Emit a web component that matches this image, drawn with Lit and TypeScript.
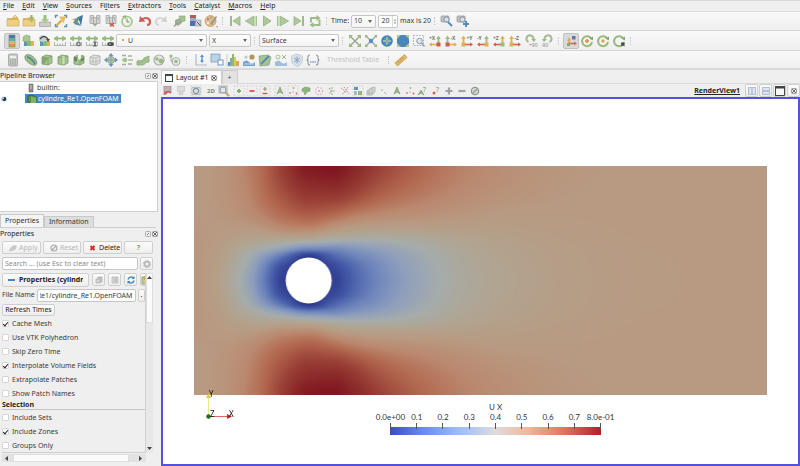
import { LitElement, html, svg, css } from "lit";
import type { TemplateResult, SVGTemplateResult } from "lit";
import { customElement, property } from "lit/decorators.js";
import { classMap } from "lit/directives/class-map.js";

const cube = svg`
  <path d="M2 4l4-2 6 1v7l-4 2-6-1z" fill="#9bbf7c" stroke="#6f8a5a" stroke-width=".8"/>
  <path d="M2 4l6 1v7M8 5l4-2" fill="none" stroke="#6f8a5a" stroke-width=".8"/>`;
const range = svg`
  <path d="M1 4.5h12" stroke="#7fa860" stroke-width="1.6"/>
  <path d="M4.500 2L1 4.500l3.500 2.500zM9.500 2L13 4.500l-3.500 2.500z" fill="#8fbb6c" stroke="#6f9650" stroke-width=".4"/>
  <path d="M1.500 8v4M12.500 8v4M1.500 11.500h11M4.500 9.500v2M7 9.500v2M9.500 9.500v2" stroke="#9a9f9a" stroke-width=".8" fill="none"/>`;
const server = (mark: SVGTemplateResult) => svg`
  <path d="M2 1.500h3.500v8H2zM8.500 1.500H12v8H8.500zM5.500 3.500h3v7h-3z" fill="#cfd0cf" stroke="#9c9e9c" stroke-width=".8"/>
  <path d="M3 4h2M9 4h2M3 6h1M10 6h1" stroke="#888" stroke-width=".7"/>${mark}`;
const folder = svg`
  <path d="M1 4h5l1-1h5v9H1z" fill="#d9b04c"/><path d="M1 5.500h12v6.500H1z" fill="#efcb6e" stroke="#bd9a50" stroke-width=".6"/>`;
const bubbles = svg`
  <circle cx="7" cy="7" r="5" fill="#e4e6e2" stroke="#a2a8a0" stroke-width="1.200"/>
  <circle cx="5" cy="6" r="1.800" fill="#92b574"/><circle cx="9" cy="8" r="2" fill="#92b574" stroke="#70865e" stroke-width=".5"/>`;
const mapped = svg`<path d="M3 7h10v5H3z" fill="#3e8bb8"/><path d="M6 7h4v5H6z" fill="#76b36a"/><path d="M10 7h3v5h-3z" fill="#e0ad3c"/>`;
const camera = svg`
  <rect x="1" y="2" width="8" height="6" rx="1" fill="#b8bcbf" stroke="#83878a" stroke-width=".7"/>
  <circle cx="6.500" cy="5.500" r="2.600" fill="#d5dde3" stroke="#7c8388" stroke-width="1"/>`;
const dots = svg`<rect x="2" y="2" width="10" height="10" fill="none" stroke="#c4c4c4" stroke-width=".8" stroke-dasharray="1.500 1.500"/>`;
const glass = svg`<circle cx="6" cy="6" r="3" fill="#dfe6ea" stroke="#8a9298" stroke-width="1"/><path d="M8.500 8.500L12 12" stroke="#8a9298" stroke-width="1.600"/>`;
const tri = svg`<path d="M4 10l3-7 3 7-3-2z" fill="#8eb670" stroke="#69854f" stroke-width=".6"/>`;
const specks = svg`<circle cx="4" cy="9" r=".9" fill="#d2766c"/><circle cx="7.500" cy="4" r=".9" fill="#8db36b"/><circle cx="10.500" cy="9.500" r=".9" fill="#c9564c"/><circle cx="7" cy="8" r=".6" fill="#666"/>`;
const ring = svg`<path d="M11.300 4.500A5 5 0 1 0 12 8" fill="none" stroke="#8cb26f" stroke-width="2"/><path d="M9 4.500l4-2v4z" fill="#7ba25c"/>`;

function axis(up: string, side: string, left: boolean, label: string): SVGTemplateResult {
  const x = left ? 10.5 : 3.5;
  const end = left ? 1 : 13;
  const dir = left ? 3 : -3;
  return svg`
    <path d="M${x} 10V4" stroke=${up} stroke-width="1.800"/><path d="M${x - 2.4} 5l2.400-3.500 2.400 3.500z" fill=${up}/>
    <path d="M${x} 10.500H${end - Math.sign(end - x)}" stroke=${side} stroke-width="1.600"/>
    <path d="M${end} 10.500l${dir}-2v4z" fill=${side}/>
    <rect x=${x - 2} y="8.500" width="4" height="4" fill=${side === "#cf4f3c" ? (up === "#8fb56f" ? "#dda93a" : left ? "#8fb56f" : "#dda93a") : "#c24b39"}/>
    <text x=${left ? 1 : 6.5} y="6" font-size="5" font-family="Noto Sans" font-weight="700" fill="#666">${label}</text>`;
}
const G = "#8fb56f";
const Y = "#dda93a";
const R = "#cf4f3c";

const icons: Record<string, SVGTemplateResult> = {
  open: svg`${folder}<path d="M9 4.500V1M7 3l2-2 2 2" stroke="#e0bd62" stroke-width="1" fill="none"/>`,
  openDown: svg`${folder}<path d="M9.500 1v4" stroke="#7fae55" stroke-width="2"/><path d="M6.500 5h6l-3 3.500z" fill="#8fbb63"/>`,
  save: svg`<path d="M1.500 8h11v4.500h-11z" fill="#c6c9c6" stroke="#9c9f9c" stroke-width=".8"/><path d="M7 1v5" stroke="#8fb56f" stroke-width="3"/><path d="M3 5h8l-4 4.500z" fill="#9dc47c"/>`,
  extract: svg`<path d="M1.500 4V1.500H4M10 1.500h2.500V4M12.500 10v2.500H10M4 12.500H1.500V10" stroke="#4d87b8" fill="none" stroke-width="1.500"/><path d="M2.500 11.500l5-5" stroke="#dca33a" stroke-width="2.400"/><path d="M5 2.500h7L9.500 9.500z" fill="#e9b64a"/>`,
  ship: svg`<path d="M1.500 6l4-1.500 2 1z" fill="#c34440"/><path d="M3 8.500l5-6 1 3-3 5z" fill="#4f8a5d"/><path d="M8 3l5-2-2 11z" fill="#2f5f93"/><path d="M4 10l4-2 3 4z" fill="#3d7f9d"/>`,
  connect: server(svg`<path d="M4.500 9.500h5l-2.500 3z" fill="#8aa27b"/>`),
  disconnect: server(svg`<path d="M6 9l4 3.500M10 9l-4 3.500" stroke="#cf3f35" stroke-width="1.600"/>`),
  reset: svg`<circle cx="7" cy="7.500" r="5" fill="#eef2e9" stroke="#9bbf7c" stroke-width="1.600"/><path d="M7 4.500v3.500h2.500" stroke="#6d7d60" fill="none"/><path d="M2 2.500L6 1v4z" fill="#8db36b"/>`,
  undo: svg`<path d="M4 5.500c4-3 8-1 8 2.500 0 2-1.500 3-3 3" fill="none" stroke="#c64a40" stroke-width="2.200"/><path d="M1 8L2 2l5.500 5.500z" fill="#c64a40"/>`,
  redo: svg`<path d="M10 5.500c-4-3-8-1-8 2.500 0 2 1.500 3 3 3" fill="none" stroke="#d4d6d4" stroke-width="2.200"/><path d="M13 8L12 2 6.500 7.500z" fill="#caccca"/>`,
  find: svg`<path d="M3 6l5-2 2 5-4 3-3-2z" fill="#93a58a"/><path d="M7 2h6v5l-4 1z" fill="#99bd7d" stroke="#7d9b67" stroke-width=".6"/><path d="M2 12.500l4-4" stroke="#85907f" stroke-width="1.500"/>`,
  mapLoad: svg`<rect x="2" y="1" width="6" height="3" fill="#b6413d"/><rect x="2" y="4" width="6" height="3" fill="#8f9fd1"/><rect x="2" y="7" width="6" height="5" fill="#2e66a6"/><path d="M8 6h5v6H7z" fill="#c3c6c8" stroke="#93989b" stroke-width=".7"/><path d="M9 8l4 4" stroke="#3f4a52"/>`,
  palette: svg`<circle cx="6.500" cy="7" r="5.500" fill="#e2b47c" stroke="#b38a58" stroke-width=".7"/><circle cx="4" cy="5" r="1.100" fill="#4b83bd"/><circle cx="7" cy="3.500" r="1" fill="#6aa651"/><circle cx="4" cy="9" r="1.100" fill="#fff"/><path d="M6 10l6-8 1 1-5 8z" fill="#8e877f"/><path d="M12 12.500h2l-1 1z" fill="#444"/>`,
  first: svg`<path d="M2 2h2v10H2z" fill="#91b673"/><path d="M12 2.500v9L5 7z" fill="#a4c48b" stroke="#8aab70" stroke-width=".8"/>`,
  stepBack: svg`<path d="M10 2v10L1.500 7z" fill="#a4c48b" stroke="#8aab70" stroke-width=".8"/><path d="M12.200 2v10" stroke="#8aab70" stroke-width="1.200"/>`,
  play: svg`<path d="M3.500 2v10l7.500-5z" fill="#a4c48b" stroke="#8aab70" stroke-width=".9"/>`,
  stepNext: svg`<path d="M4 2v10l8.500-5z" fill="#a4c48b" stroke="#8aab70" stroke-width=".8"/><path d="M1.800 2v10" stroke="#8aab70" stroke-width="1.200"/>`,
  last: svg`<path d="M10 2h2v10h-2z" fill="#91b673"/><path d="M2 2.500v9L9 7z" fill="#a4c48b" stroke="#8aab70" stroke-width=".8"/>`,
  loop: svg`<path d="M3 8.500V4h6.500M11.500 5.500V11H4.500" fill="none" stroke="#93b578" stroke-width="1.900"/><path d="M8.500 1l4 3-4 3zM5.500 8l-4 3 4 2.800z" fill="#93b578"/>`,
  camEdit: svg`${camera}<path d="M8 8l4 4" stroke="#3b81b9" stroke-width="2"/>`,
  camAdd: svg`${camera}<path d="M10 7v6M7 10h6" stroke="#3b81b9" stroke-width="2"/>`,
  colorbar: svg`<path d="M4 1h6v3H4z" fill="#2f6e9e"/><path d="M4 4h6v3H4z" fill="#5aa69a"/><path d="M4 7h6v3H4z" fill="#dcb64a"/><path d="M4 10h6v3H4z" fill="#d98f3c"/><rect x="4" y="1" width="6" height="12" fill="none" stroke="#6c7b85" stroke-width=".6"/>`,
  editMap: svg`${mapped}<path d="M2 7V3l3-2 4 1v5l-3 1z" fill="#9fc283" stroke="#7d9d62" stroke-width=".6"/>`,
  separate: svg`${mapped}<path d="M2 7V3l3-2 4 1v5l-3 1z" fill="#c5c9cc"/><path d="M3 5q4-5 8 0" fill="none" stroke="#333" stroke-width="1.400"/><path d="M9 5h4l-2 3z" fill="#333"/>`,
  rescale: range,
  rescaleCustom: svg`${range}<circle cx="9.500" cy="10" r="2.400" fill="#666"/><circle cx="9.500" cy="10" r=".9" fill="#eee"/>`,
  rescaleTime: svg`${range}<path d="M8 7.500h4l-1.500 2.500 1.500 2.500H8l1.500-2.500z" fill="#555"/>`,
  rescaleVisible: svg`${range}<ellipse cx="9.500" cy="10" rx="3.200" ry="2" fill="#333"/><circle cx="9" cy="10" r=".7" fill="#fff"/>`,
  resetCam: svg`<path d="M2 2l10 10M12 2L2 12" stroke="#8c9a80" stroke-width="1.400"/><path d="M1 1h4L1 5zM13 1v4L9 1zM1 13V9l4 4zM13 13H9l4-4z" fill="#8fb070"/>`,
  closest: svg`<path d="M2 2l10 10M12 2L2 12" stroke="#8c9a80" stroke-width="1.300"/><path d="M1 1h3L1 4zM13 1v3l-3-3zM1 13v-3l3 3zM13 13h-3l3-3z" fill="#8fb070"/><circle cx="7" cy="7" r="2.200" fill="#3e84bb"/>`,
  zoomData: svg`<circle cx="7" cy="7" r="5.800" fill="#2f74b1"/><path d="M7 3v8M3 7h8" stroke="#8fb98b" stroke-width="1.800"/><path d="M4 4l6 6M10 4l-6 6" stroke="#6fa0a2" stroke-width=".8"/>`,
  zoomClosest: svg`<rect x="1" y="1" width="12" height="12" rx="2" fill="#3277b4"/><path d="M1 1h4L1 5zM13 1v4L9 1zM1 13V9l4 4zM13 13H9l4-4z" fill="#a5c585"/>`,
  zoomBox: svg`<rect x="1.500" y="1.500" width="10" height="10" fill="none" stroke="#999" stroke-width=".9" stroke-dasharray="1.500 1.300"/><circle cx="7.500" cy="7" r="2.800" fill="#d6e2ea" stroke="#8797a3" stroke-width="1"/><path d="M9.500 9l3 3.500" stroke="#8797a3" stroke-width="1.500"/>`,
  px: axis(G, Y, true, "+X"),
  mx: axis(G, Y, false, "-X"),
  py: axis(Y, R, false, "+Y"),
  my: axis(G, R, true, "-Y"),
  pz: axis(Y, R, true, "+Z"),
  mz: axis(Y, R, false, "-Z"),
  rotR: svg`<path d="M4.500 8a3.500 3.500 0 1 1 5-3" fill="none" stroke="#9ab485" stroke-width="2"/><path d="M7 5h5l-2 3z" fill="#8fae78"/><text x="5" y="13" font-size="5" font-family="Noto Sans" fill="#777">+90</text>`,
  rotL: svg`<path d="M9.500 8a3.500 3.500 0 1 0-5-3" fill="none" stroke="#9ab485" stroke-width="2"/><path d="M7 5H2l2 3z" fill="#8fae78"/><text x="1" y="13" font-size="5" font-family="Noto Sans" fill="#777">-90</text>`,
  orient: svg`<path d="M5 11V6" stroke="#dba63a" stroke-width="1.500"/><path d="M3 6.500l2-3 2 3z" fill="#dba63a"/><path d="M4 9.500h7" stroke="#cf5a45" stroke-width="1.500"/><path d="M10 7.500l3 2-3 2z" fill="#cf5a45"/><rect x="8" y="2" width="3.500" height="3.500" fill="#55699b"/><rect x="3" y="9" width="3" height="3" fill="#7aa35b"/>`,
  centerShow: svg`${ring}<path d="M7 5v4M5 7h4" stroke="#d7903c" stroke-width="1.800"/>`,
  centerReset: svg`${ring}<circle cx="7" cy="7" r="1.800" fill="#d7a13c"/>`,
  centerPick: svg`${ring}<path d="M9 8.500h3.500v4l-1.500-1-1.500 1z" fill="#333"/>`,
  calc: svg`<rect x="2.500" y="1" width="9" height="12" rx="1" fill="#c4c6c4" stroke="#929492" stroke-width=".8"/><path d="M4 3h6v2H4z" fill="#eef2ee"/><path d="M4 7h6M4 9h6M4 11h6" stroke="#7f817f" stroke-dasharray="1.300 1"/>`,
  contour: svg`<path d="M1 3c2-3 8-1 11 4 2 4 0 6-3 5C5 11 0 7 1 3z" fill="#8fb873" stroke="#66855a" stroke-width=".8"/><path d="M3 4c2 0 6 3 8 7" fill="none" stroke="#3c6897" stroke-width="1.500"/>`,
  clip: svg`${cube}<path d="M2 4l6 1-4 6.500-2-.5z" fill="#739c5b"/>`,
  slice: svg`${cube}<path d="M6 2.500l3 .5v8l-3 1z" fill="#c3deae" stroke="#7b9a63" stroke-width=".5"/>`,
  threshold: svg`${cube}<path d="M2 4l3 .5v4L2 8zM9 6l3-2v3l-3 2z" fill="#54794a"/><path d="M6 1h3v4l-1.500 2L6 5z" fill="#f0f3ee"/>`,
  subset: svg`<path d="M2 4l4-2 6 1v7l-4 2-6-1z" fill="#dcdedc" stroke="#a0a3a0" stroke-width=".8"/><path d="M2 4l6 1v7M8 5l4-2M5 4.500v7M2 8l6 1 4-2" fill="none" stroke="#adb0ad" stroke-width=".7"/>`,
  glyph: svg`<path d="M7 0l2.500 3H4.500zM7 14l-2.500-3h5zM0 7l3-2.500v5zM14 7l-3 2.500v-5z" fill="#5586b0"/><circle cx="7" cy="7" r="3.600" fill="#a8c592" stroke="#6d8e9f" stroke-width=".8"/><path d="M7 3v8M3 7h8" stroke="#6d8e9f" stroke-width=".7"/>`,
  stream: svg`<path d="M2 2.500h4M8 3h4M2 7h3M2 11.500h4M8 11h4" stroke="#9ba39a" stroke-width="1.400" fill="none"/><circle cx="5" cy="7" r="2.300" fill="#9bbd82"/><path d="M8 6h5v2H8z" fill="#afc89c"/>`,
  warp: svg`<path d="M1 8c3-1 5 1 7-3l5-2v6c-4 0-4 3-7 3H1z" fill="#9cbd83" stroke="#7e9f65" stroke-width=".8"/><path d="M1 10c4-1 6 0 9-4" fill="none" stroke="#7e9f65" stroke-width=".6"/>`,
  group: bubbles,
  extractLevel: svg`<circle cx="8" cy="8.500" r="4" fill="#e4e6e2" stroke="#a2a8a0" stroke-width="1"/><circle cx="8" cy="8.500" r="1.800" fill="#92b574"/><circle cx="3" cy="3" r="1.600" fill="#92b574"/><path d="M3 4v4l2 1" fill="none" stroke="#8a9188" stroke-width=".8"/>`,
  plotLine: svg`<path d="M2 1v11h11" fill="none" stroke="#a7b3bd" stroke-width="1.200"/><path d="M8 2v7" stroke="#3f83bd" stroke-width="1.400"/><path d="M6 4l2-2.500L10 4zM6 7.500L8 10l2-2.500z" fill="#3f83bd"/>`,
  probe: svg`<rect x="1" y="1" width="9" height="8" fill="#b5cee4" stroke="#6d94b5" stroke-width=".8"/><rect x="8" y="7" width="5" height="5" fill="#fff" stroke="#5a8fbd" stroke-width="1"/>`,
  histogram: svg`<path d="M2 9h2v4H2z" fill="#3f7fb9"/><path d="M4 5h2v8H4z" fill="#5da7b8"/><path d="M6 1h2v12H6z" fill="#7eb25a"/><path d="M8 4h2v9H8z" fill="#e0c148"/><path d="M10 8h3v5h-3z" fill="#d99c3c"/><path d="M1 1v12h12" fill="none" stroke="#b5b5b5" stroke-width=".7"/>`,
  plotSel: svg`<circle cx="10" cy="4" r="2.600" fill="#a98647"/><circle cx="4" cy="4" r="1.600" fill="#b7c0c8"/><path d="M1 9q4-3 6 0t6 0v4H1z" fill="#5f97c8"/><path d="M2 11h10" stroke="#dce9f4" stroke-width=".8"/>`,
  ruled: svg`<path d="M1 3l9-1 3 2-2 8-9 1z" fill="#9dbb88" stroke="#6d8f7c" stroke-width=".7"/><path d="M3 11l8-8" stroke="#2f75a7" stroke-width="1.700"/>`,
  plotGroup: svg`<circle cx="4" cy="4" r="2" fill="none" stroke="#9bb888"/><path d="M8 2l4 4M12 2L8 6" stroke="#95b07f"/><path d="M1 9q4-3 6 0t6 0v4H1z" fill="#94b8d8"/>`,
  shield: svg`<path d="M7 1l5.500 2v4c0 4-3 5.500-5.500 6.500C4.500 12.500 1.500 11 1.500 7V3z" fill="#d3dfea" stroke="#b5c6d5" stroke-width=".8"/><path d="M7 3.500v7M4 5l6 4M10 5l-6 4" stroke="#7d9ab5"/>`,
  braces: svg`<path d="M4 2q-2 0-2 2v2L1 7l1 1v2q0 2 2 2M10 2q2 0 2 2v2l1 1-1 1v2q0 2-2 2" fill="none" stroke="#868a8d" stroke-width="1.100"/><circle cx="4.800" cy="9" r=".8" fill="#3f83bd"/><circle cx="7" cy="9" r=".8" fill="#3f83bd"/><circle cx="9.200" cy="9" r=".8" fill="#3f83bd"/>`,
  ruler: svg`<path d="M1 10L10.500 1.500l2.500 3L3.500 13z" fill="#dfb050" stroke="#b98f40" stroke-width=".8"/><path d="M4 8l1 1.500M6 6l1 1.500M8 4.500l1 1.500" stroke="#8a6420" stroke-width=".7"/>`,
  vUndo: svg`<rect x="3" y="2.500" width="7" height="5" fill="#b8a9a9" stroke="#8d7a7a" stroke-width=".7"/><path d="M4 10q3-4 6-1" stroke="#cb4941" stroke-width="1.800" fill="none"/><path d="M2.500 11l.5-4 3 3z" fill="#cb4941"/>`,
  vRedo: svg`<rect x="3.500" y="2.500" width="7" height="5" fill="#d8dad8" stroke="#bcbebc" stroke-width=".7"/><circle cx="7" cy="9" r="2.500" fill="#cfd1cf"/>`,
  vCam: svg`${dots}<circle cx="7" cy="7" r="2.600" fill="#d4dde2" stroke="#7c8992" stroke-width="1.100"/><path d="M3 3.500h8v7H3z" fill="none" stroke="#9ea8ae" stroke-width=".8"/>`,
  v2d: svg`<text x="3" y="9" font-size="6" font-family="Noto Sans" font-weight="700" fill="#71825f">2D</text>`,
  vZoom: svg`<rect x="2" y="2" width="8" height="7" fill="#cfd3d5" stroke="#9a9fa2" stroke-width=".8"/>${glass}<path d="M9 9l3 3" stroke="#c79b45" stroke-width="1.800"/>`,
  vAdd: svg`${dots}<path d="M7 5v4M5 7h4" stroke="#76a656" stroke-width="1.900"/>`,
  vSub: svg`${dots}<path d="M4.500 7h5" stroke="#cc4038" stroke-width="1.800"/>`,
  vTog: svg`${dots}<path d="M7 3v4M5 5h4" stroke="#7a8f6b" stroke-width="1.200"/><path d="M4.500 9.500h5" stroke="#cc4038" stroke-width="1.400"/>`,
  vCells: svg`${dots}${tri}`,
  vPoints: svg`${dots}${specks}`,
  vFrCells: svg`<path d="M3 5l3-2 5 1v3l-3 1-2 3-1-3-2-1z" fill="#84ae6e" stroke="#6a9055" stroke-width=".6"/>`,
  vFrPoints: svg`<circle cx="7" cy="7" r="3.600" fill="none" stroke="#e0aaa2" stroke-width="1.200" stroke-dasharray="1.500 1.500"/><circle cx="7" cy="7" r=".8" fill="#c95b50"/>`,
  vPoly: svg`<path d="M4 4l3 3-3 3M7 3v8M5 7h6" fill="none" stroke="#9db489" stroke-width="1.200" stroke-dasharray="2 1"/>`,
  vPolyPt: svg`<path d="M3 4l4 3-3 4M6 3l5 7M10 3L7 9" fill="none" stroke="#c08a80" stroke-width="1" stroke-dasharray="1.500 1"/>`,
  vBlock: svg`<path d="M3 3h4v3H3z" fill="#4c87b4"/><path d="M7 7h4v4H7z" fill="#86ad6a"/><path d="M3 7h3v4H3z" fill="#9fb1bd"/>${dots}`,
  vFrBlock: svg`<path d="M3 7l4-3 4-1v5l-3 3H3z" fill="#cdd0cb" stroke="#a5aaa3" stroke-width=".8"/><path d="M3 9h6M5 6v5M8 4v7" stroke="#a0a59d" stroke-width=".6"/>`,
  vHover: svg`<circle cx="5" cy="6" r="1" fill="#bcc1b8"/><path d="M7 8l2.500 2.500" stroke="#a5aaa2"/>`,
  vInterCell: tri,
  vInterPt: specks,
  vAskCell: svg`<path d="M2 11l3-5 3 5-3-2z" fill="#8eb670" stroke="#69854f" stroke-width=".6"/><text x="7" y="8" font-size="7" font-family="Noto Sans" fill="#6f8b5b">?</text>`,
  vAskPt: svg`<circle cx="5" cy="9" r="1.500" fill="#c94d43"/><text x="7" y="8" font-size="7" font-family="Noto Sans" fill="#6f8b5b">?</text>`,
  vGrow: svg`<path d="M7 3.500v7M3.500 7h7" stroke="#969996" stroke-width="2.200"/>`,
  vShrink: svg`<path d="M3.500 7h7" stroke="#969996" stroke-width="2.200"/>`,
  vClear: svg`<circle cx="7" cy="7" r="3.600" fill="#d9dbd9" stroke="#858885" stroke-width="1.300"/><path d="M5 9l4-4" stroke="#858885" stroke-width="1.300"/>`,
  splitH: svg`<rect x="3.500" y="3.500" width="7" height="7" fill="#dde3f1" stroke="#b3bdd6"/><path d="M7 4v6" stroke="#b3bdd6" stroke-width="1.300"/>`,
  splitV: svg`<rect x="3.500" y="3.500" width="7" height="7" fill="#dde3f1" stroke="#b3bdd6"/><path d="M4 7h6" stroke="#a7b2cf" stroke-width="1.300"/>`,
  maximize: svg`<rect x="2.500" y="2.500" width="9" height="9" fill="#f7f7f5" stroke="#3f4543"/><path d="M2 3.500h10" stroke="#3f4543" stroke-width="2"/>`,
  close: svg`<rect x="4.500" y="4.500" width="5" height="5" rx="1" fill="#eee" stroke="#888" stroke-width=".8"/><path d="M5 5l4 4M9 5L5 9" fill="none" stroke="#555" stroke-width=".9"/>`,
  float: svg`<rect x="4.500" y="4.500" width="5" height="5" rx="1" fill="#eee" stroke="#999" stroke-width=".8"/><path d="M6 8l2-2" fill="none" stroke="#777" stroke-width=".9"/>`,
  apply: svg`<path d="M4 11l1-4 4-3 3 1-2 4-4 1z" fill="#c6c9c6"/>`,
  cancel: svg`<circle cx="8" cy="7" r="3" fill="none" stroke="#a9aba9" stroke-width="1.100"/><path d="M6 9l4-4" stroke="#a9aba9" stroke-width="1.100"/>`,
  remove: svg`<path d="M5.500 5l4 4M9.500 5l-4 4" stroke="#cf2f2a" stroke-width="2"/>`,
  gear: svg`<circle cx="7" cy="7" r="2.400" fill="none" stroke="#b8bab8" stroke-width="1.800"/><circle cx="7" cy="7" r="3.800" fill="none" stroke="#b8bab8" stroke-width="1" stroke-dasharray="1.500 1.500"/>`,
  copy: svg`<path d="M6 4h4v5H6z" fill="#c9cbc9" stroke="#a9aba9" stroke-width=".8"/><path d="M4 6h4v4H4z" fill="#d6d8d6" stroke="#a9aba9" stroke-width=".8"/>`,
  paste: svg`<path d="M4 4h6v6H4z" fill="#d6d8d6" stroke="#b5b7b5" stroke-width=".8"/><path d="M6 5h3v4H6z" fill="#c3c5c3"/>`,
  refresh: svg`<path d="M4 6.500A3.200 3.200 0 0 1 9.500 5M10 7.500A3.200 3.200 0 0 1 4.500 9" fill="none" stroke="#3f83b9" stroke-width="1.300"/><path d="M10.500 3v3H7.500zM3.500 11V8h3z" fill="#3f83b9"/>`,
  disk: svg`<path d="M5 4h6v7H5z" fill="#c4c985" stroke="#8f9560" stroke-width=".8"/><path d="M8 3v4" stroke="#dca33a" stroke-width="2"/>`,
  window: svg`<rect x="3.500" y="3.500" width="7" height="7" fill="#f7f7f5" stroke="#3f4543"/><path d="M3 4h8" stroke="#3f4543" stroke-width="2"/>`,
  pc: svg`<path d="M5 3h4v8H5z" fill="#8a8c8a" stroke="#666" stroke-width=".6"/><path d="M6 5h2M6 7h2" stroke="#ddd" stroke-width=".8"/>`,
  foam: svg`<path d="M3 4l4-1 4 2v6l-5 1-3-2z" fill="#5f9147" stroke="#30592b" stroke-width=".8"/><path d="M6 5l5 .5v5.500L6 12z" fill="#82b265"/>`,
  eye: svg`<ellipse cx="6" cy="7" rx="3" ry="2.500" fill="#bcd4e6"/><circle cx="6.300" cy="7" r="1.900" fill="#17344f"/><circle cx="5.200" cy="6.200" r=".8" fill="#fff"/>`,
};

const icon = (name: string): TemplateResult =>
  html`<svg class="ico" viewBox="0 0 14 14" width="14" height="14" aria-hidden="true">${icons[name]}</svg>`;

const base = css`
  :host { box-sizing: border-box; }
  *, *::before, *::after { box-sizing: border-box; }
  button, input, select { font: inherit; color: inherit; margin: 0; padding: 0; }
  .ico { display: block; flex: none; }
  .tool { width: 16px; height: 16px; border: 0; background: none; display: flex; align-items: center; justify-content: center; flex: none; }
  .tool .ico { opacity: .88; }
  .tool.small { width: 13px; }
  .tool.on { background: #d9d9d9; border: 1px solid #c2c2c2; border-radius: 2px; }
  .framed { border: 1px solid #cfcfcf; border-radius: 2px; background: linear-gradient(#fcfcfc, #eeeeee); display: flex; align-items: center; justify-content: center; overflow: hidden; }
`;

const tools = (names: string[], on = "", small = false) =>
  names.map(n => html`<button class=${classMap({ tool: true, on: n === on, small })} aria-label=${n}>${icon(n)}</button>`);

/* Velocity samples: columns follow the stream, rows go from the axis to the wall. */
const XS = [-114, -90, -75, -60, -45, -25, 0, 25, 45, 67, 90, 120, 155, 200, 260, 340, 458];
const YS = [0, 12, 23, 32, 42, 52, 65, 80, 97, 114];
const U = [
  [.51, .46, .39, .3, .18, .02, 0, .02, .11, .195, .26, .335, .4, .445, .478, .495, .5],
  [.51, .465, .4, .32, .2, .04, 0, .04, .125, .205, .27, .34, .405, .447, .479, .495, .5],
  [.51, .475, .42, .35, .26, .13, 0, .11, .18, .235, .29, .352, .412, .452, .48, .496, .5],
  [.51, .485, .44, .4, .355, .29, .21, .215, .25, .285, .325, .375, .425, .458, .482, .497, .5],
  [.51, .493, .472, .455, .445, .445, .43, .395, .38, .38, .39, .415, .445, .468, .487, .498, .5],
  [.507, .5, .495, .5, .515, .55, .56, .51, .485, .472, .47, .472, .475, .482, .492, .499, .5],
  [.503, .508, .52, .54, .57, .61, .635, .61, .575, .55, .535, .525, .51, .498, .498, .5, .5],
  [.5, .512, .53, .56, .6, .65, .695, .69, .66, .62, .592, .565, .538, .515, .503, .5, .5],
  [.5, .513, .535, .57, .615, .685, .745, .755, .72, .67, .632, .595, .56, .53, .507, .5, .5],
  [.5, .514, .538, .578, .622, .705, .785, .796, .755, .7, .655, .61, .57, .535, .51, .5, .5],
];
const STOPS: [number, number, number, number][] = [
  [0, 44, 56, 140], [.1, 72, 94, 170], [.2, 112, 135, 188], [.28, 143, 159, 188], [.36, 166, 172, 171],
  [.44, 177, 164, 144], [.5, 184, 154, 130], [.56, 186, 136, 110], [.62, 178, 104, 80], [.7, 152, 61, 52], [.8, 126, 20, 31],
];

function slopes(xs: number[], v: number[]): number[] {
  const n = xs.length;
  const d = v.slice(1).map((b, i) => (b - v[i]) / (xs[i + 1] - xs[i]));
  return v.map((_, i) => {
    if (i === 0 || i === n - 1) return 0;
    return d[i - 1] * d[i] <= 0 ? 0 : (2 * d[i - 1] * d[i]) / (d[i - 1] + d[i]);
  });
}
function resample(xs: number[], v: number[], at: number[]): number[] {
  const m = slopes(xs, v);
  return at.map(x => {
    let i = 0;
    while (i < xs.length - 2 && x > xs[i + 1]) i++;
    const h = xs[i + 1] - xs[i];
    const t = Math.min(1, Math.max(0, (x - xs[i]) / h));
    const s = 1 - t;
    return (1 + 2 * t) * s * s * v[i] + t * s * s * h * m[i] + t * t * (3 - 2 * t) * v[i + 1] - t * t * s * h * m[i + 1];
  });
}
function shade(v: number): number[] {
  let i = 0;
  while (i < STOPS.length - 2 && v > STOPS[i + 1][0]) i++;
  const a = STOPS[i], b = STOPS[i + 1];
  const t = Math.min(1, Math.max(0, (v - a[0]) / (b[0] - a[0])));
  return [1, 2, 3].map(k => a[k] + (b[k] - a[k]) * t);
}

@customElement("flow-field")
class FlowField extends LitElement {
  static styles = css`
    :host { display: block; }
    canvas { display: block; width: 100%; aspect-ratio: 572 / 229; }
  `;
  firstUpdated() {
    const c = this.renderRoot.querySelector("canvas")!;
    const g = c.getContext("2d")!;
    const w = c.width, h = c.height;
    const px = Array.from({ length: w }, (_, i) => i - 114);
    const py = Array.from({ length: 116 }, (_, i) => i);
    const rows = U.map(r => resample(XS, r, px));
    const cols = px.map((_, i) => resample(YS, rows.map(r => r[i]), py));
    const img = g.createImageData(w, h);
    for (let y = 0; y < h; y++)
      for (let x = 0; x < w; x++) {
        const [r, gr, b] = shade(cols[x][Math.abs(y - 114)]);
        img.data.set([r, gr, b, 255], (y * w + x) * 4);
      }
    g.putImageData(img, 0, 0);
    g.fillStyle = "#fff";
    g.beginPath();
    g.arc(114.5, 114.5, 23, 0, Math.PI * 2);
    g.fill();
  }
  render() {
    return html`<canvas width="572" height="229" role="img" aria-label="U X"></canvas>`;
  }
}

@customElement("check-row")
class CheckRow extends LitElement {
  static styles = [base, css`
    :host { display: block; }
    label { display: flex; align-items: center; gap: 3px; line-height: 13px; white-space: nowrap; }
    input { appearance: none; width: 7px; height: 7px; border: 1px solid #d6d6d6; background: #fff; border-radius: 1px; display: grid; place-items: center; }
    input:checked::after { content: ""; width: 3px; height: 5px; border: solid #222; border-width: 0 1px 1px 0; transform: rotate(40deg); }
  `];
  @property() label = "";
  @property({ type: Boolean }) on = false;
  render() {
    return html`<label><input type="checkbox" .checked=${this.on}>${this.label}</label>`;
  }
}

@customElement("app-root")
class AppRoot extends LitElement {
  static styles = [base, css`
    :host { display: flex; flex-direction: column; height: 100vh; overflow: hidden; background: #efefef; color: #3a3a3a; font: 7px/10px "Noto Sans", sans-serif; }
    .menu { display: flex; height: 12px; padding-left: 3px; gap: 8px; border-top: 1px solid #d8d8d8; border-bottom: 1px solid #dcdcdc; }
    .menu button { border: 0; background: none; line-height: 10px; color: #222; }
    .bar { display: flex; align-items: center; height: 19px; padding-left: 5px; border-bottom: 1px solid #d6d6d6; background: linear-gradient(#f9f9f9, #efefef); white-space: nowrap; }
    .bar.mid { height: 20px; padding-left: 4px; }
    .bar.end { border-bottom: 2px solid #d9d9d9; }
    .sep { width: 2px; height: 8px; margin: 0 3px; border-left: 1px dotted #c4c4c4; flex: none; }
    .gap { width: 2px; flex: none; }
    .pick { position: relative; display: block; flex: none; height: 13px; }
    .pick select { appearance: none; width: 100%; height: 13px; border: 1px solid #c6c6c6; border-radius: 2px; background: linear-gradient(#fff, #f3f3f3); padding: 0 2px; display: block; }
    .pick::after { content: ""; position: absolute; right: 4px; top: 5px; border: 2px solid transparent; border-top: 3px solid #666; border-bottom: 0; pointer-events: none; }
    .pick.array { width: 91px; } .pick.array select { padding-left: 11px; }
    .pick.array::before { content: ""; position: absolute; left: 6px; top: 5px; width: 2px; height: 2px; background: #dba63a; }
    .pick.comp { width: 42px; margin-left: 2px; }
    .pick.repr { width: 80px; }
    .pick.time { width: 25px; margin: 0 2px; }
    .spin { display: flex; height: 13px; width: 20px; border: 1px solid #c6c6c6; border-radius: 2px; background: #fff; margin-right: 2px; flex: none; }
    .spin input { width: 13px; border: 0; background: none; text-align: center; }
    .spin svg { border-left: 1px solid #ddd; }
    .off { color: #c3c3c3; border: 0; background: none; padding: 0 6px; }
    .body { flex: 1; min-height: 0; display: flex; gap: 3px; }
    .side { width: 158px; flex: none; display: flex; flex-direction: column; min-height: 0; }
    .title { display: flex; height: 11px; align-items: center; color: #222; flex: none; margin: 0; font-weight: 400; font-size: 7px; }
    .title .name { flex: 1; }
    .title button { width: 7px; height: 10px; border: 0; background: none; display: flex; align-items: center; justify-content: center; overflow: hidden; }
    .tree { flex: 0 1 131px; margin: 0; padding: 0; list-style: none; background: #fff; border: 1px solid #cfcfcf; border-left: 0; }
    .node { display: flex; align-items: center; height: 11px; padding-left: 24px; }
    .node .ico { margin-right: -1px; }
    .node .eye { width: 24px; margin-right: 3px; display: flex; margin-left: -2px; }
    .node.sel { padding-left: 0; }
    .hit { display: flex; align-items: center; height: 9px; background: #4688c5; color: #fff; padding-right: 2px; overflow: hidden; }
    .tabs { display: flex; align-items: flex-end; height: 16px; flex: none; border-bottom: 1px solid #cfcfcf; margin-right: 2px; }
    .tab { height: 11px; padding: 0 4px; border: 1px solid #c9c9c9; border-bottom: 0; background: #dedede; color: #333; }
    .tab.cur { height: 13px; background: #f5f5f5; }
    .props { flex: 1; min-height: 0; padding: 2px 5px 3px 2px; display: flex; flex-direction: column; gap: 3px; }
    .row { display: flex; gap: 2px; flex: none; }
    .row .framed { height: 13px; flex: 1; color: #222; }
    .row .framed:disabled { color: #b9b9b9; }
    .row .help { color: #76a04f; font-weight: 700; flex: 0 0 29px; }
    .row .framed.sq { flex: 0 0 13px; }
    .text { min-width: 0; flex: 1; height: 13px; border: 1px solid #c6c6c6; border-radius: 2px; background: #fff; padding: 0 2px; }
    .text::placeholder { color: #8a8a8a; opacity: 1; }
    .area { flex: 1; min-height: 0; display: grid; grid-template: 1fr 10px / 1fr 7px; }
    .form { min-width: 0; min-height: 0; overflow: hidden; display: flex; flex-direction: column; justify-content: space-between; border-right: 1px solid #d0d0d0; border-bottom: 1px solid #cfcfcf; }
    .form .row { margin-bottom: 1px; }
    .form .row .head { flex: 0 0 87px; justify-content: flex-start; padding-left: 3px; font-weight: 700; white-space: nowrap; height: 14px; }
    .head .dash { width: 7px; height: 2px; background: #4a86b8; margin: 0 4px 0 2px; flex: none; }
    .head .cut { overflow: hidden; }
    .form .acts { gap: 3px; }
    .form .file { align-items: center; white-space: nowrap; }
    .form .row .framed.refresh { flex: 0 0 53px; height: 12px; }
    .form .row .framed.part { flex: 0 0 7px; }
    .form h3 { margin: 0; font-size: 7px; line-height: 9px; color: #222; border-bottom: 1px solid #c4c4c4; }
    .vs { display: flex; flex-direction: column; justify-content: space-between; background: #e8e8e8; }
    .vs .thumb { height: 50px; background: #fbfbfb; border: 1px solid #ddd; display: flex; justify-content: center; padding-top: 2px; }
    .hs { display: flex; align-items: center; justify-content: space-between; padding: 0 3px; background: #e2e2e2; height: 8px; margin-top: 1px; }
    .hs .thumb { flex: 1; height: 8px; margin: 0 10px 0 4px; background: #fbfbfb; border: 1px solid #ddd; }
    .arrow { display: block; }
    .vs .arrow.down { margin: 0 auto 2px; }
    .main { flex: 1; min-width: 0; display: flex; flex-direction: column; }
    .ltabs { display: flex; height: 14px; border-bottom: 1px solid #d9d9d9; }
    .ltab { display: flex; align-items: center; height: 14px; border: 1px solid #cdcdcd; border-bottom: 0; background: #e2e2e2; }
    .ltab.cur { background: #fbfbfb; color: #222; }
    .ltab.cur .ico:last-child { margin-left: -2px; }
    .ltab.add { width: 16px; justify-content: center; color: #555; }
    .vbar { display: flex; align-items: center; height: 13px; }
    .vbar .view { margin-left: auto; margin-right: 4px; color: #222; font-weight: 700; text-decoration: underline; }
    .vbar .framed { width: 13px; height: 13px; margin-left: 1px; flex: none; }
    .render { flex: 1; min-height: 0; background: #fff; border: 2px solid #5252dc; overflow: hidden; }
    .plot { position: relative; margin: 67px 31px 0; }
    .triad { position: absolute; left: 8px; bottom: -28px; }
    .legend { display: grid; grid-template-columns: 214fr 236fr 184fr; margin-top: 7px; }
    .scale { grid-column: 2; font: 8px/10px Lato, sans-serif; color: #333; text-align: center; }
    .labels { display: grid; grid-template-columns: repeat(9, 1fr); }
    .mark { display: flex; flex-direction: column; align-items: center; width: 0; justify-self: center; white-space: nowrap; }
    .mark::after { content: ""; width: 1px; height: 6px; background: #555; margin-top: 1px; }
    .ramp { height: 8px; margin: -2px 13px 0; background: linear-gradient(90deg, #3b4cc0, #6888ee 15%, #9abbff 32%, #dddcdc 50%, #f2b89c 65%, #dd7a5f 82%, #b01f2c); }
  `];

  render() {
    const menus = ["File", "Edit", "View", "Sources", "Filters", "Extractors", "Tools", "Catalyst", "Macros", "Help"];
    const sep = html`<span class="sep"></span>`;
    const gap = html`<span class="gap"></span>`;
    return html`
      <nav class="menu">${menus.map(m => m === "Filters"
        ? html`<button>Fi<u>l</u>ters</button>`
        : html`<button><u>${m[0]}</u>${m.slice(1)}</button>`)}</nav>

      <div class="bar" role="toolbar">
        ${tools(["open", "openDown", "save", "extract", "ship"])}${gap}
        ${tools(["connect", "disconnect", "reset"])}${gap}
        ${tools(["undo", "redo"])}${gap}
        ${tools(["find", "mapLoad", "palette"])}${sep}
        ${tools(["first", "stepBack", "play", "stepNext", "last", "loop"])}${sep}
        <label for="time">Time:</label>
        <span class="pick time"><select id="time"><option>10</option></select></span>
        <span class="spin"><input aria-label="Time index" value="20">
          <svg width="6" height="11" viewBox="0 0 6 11"><path d="M1 4l2-2 2 2zM1 7l2 2 2-2z" fill="#666"/></svg></span>
        <span>max is 20</span>${sep}
        ${tools(["camEdit", "camAdd"])}
      </div>

      <div class="bar mid" role="toolbar">
        ${tools(["colorbar", "editMap", "separate", "rescale", "rescaleCustom", "rescaleTime", "rescaleVisible"], "colorbar")}
        <span class="pick array"><select aria-label="Array"><option>U</option></select></span>
        <span class="pick comp"><select aria-label="Component"><option>X</option></select></span>${sep}
        <span class="pick repr"><select aria-label="Representation"><option>Surface</option></select></span>${sep}
        ${tools(["resetCam", "closest", "zoomData", "zoomClosest", "zoomBox", "px", "mx", "py", "my", "pz", "mz", "rotR", "rotL"])}${sep}
        ${tools(["orient", "centerShow", "centerReset", "centerPick"], "orient")}${sep}
      </div>

      <div class="bar end" role="toolbar">
        ${tools(["calc"])}${gap}${tools(["contour", "clip", "slice", "threshold", "subset", "glyph", "stream", "warp", "group", "extractLevel"])}${sep}
        ${gap}${tools(["plotLine", "probe", "histogram", "plotSel", "ruled", "plotGroup", "shield", "braces"])}
        <button class="off" disabled>Threshold Table</button>${sep}
        ${tools(["ruler"])}
      </div>

      <div class="body">
        <aside class="side">
          ${this.dockTitle("Pipeline Browser")}
          <ul class="tree">
            <li class="node">${icon("pc")}builtin:</li>
            <li class="node sel"><span class="eye">${icon("eye")}</span><span class="hit">${icon("foam")}cylindre_Re1.OpenFOAM</span></li>
          </ul>
          <div class="tabs" role="tablist">
            <button class="tab cur" role="tab">Properties</button>
            <button class="tab" role="tab">Information</button>
          </div>
          ${this.dockTitle("Properties")}
          <div class="props">
            <div class="row">
              <button class="framed" disabled>${icon("apply")}Apply</button>
              <button class="framed" disabled>${icon("cancel")}Reset</button>
              <button class="framed">${icon("remove")}Delete</button>
              <button class="framed help">?</button>
            </div>
            <div class="row">
              <input class="text" aria-label="Search" placeholder="Search ... (use Esc to clear text)">
              <button class="framed sq" aria-label="Advanced">${icon("gear")}</button>
            </div>
            ${this.form()}
          </div>
        </aside>

        <main class="main">
          <div class="ltabs" role="tablist">
            <button class="ltab cur" role="tab">${icon("window")}Layout #1${icon("close")}</button>
            <button class="ltab add" aria-label="New layout">+</button>
          </div>
          <div class="vbar" role="toolbar">
            ${tools(["vUndo", "vRedo"], "", true)}${gap}
            ${tools(["vCam"], "", true)}${gap}
            ${tools(["v2d", "vZoom"], "", true)}${gap}
            ${tools(["vAdd", "vSub", "vTog"], "", true)}${gap}
            ${tools(["vCells", "vPoints", "vFrCells", "vFrPoints", "vPoly", "vPolyPt", "vBlock", "vFrBlock", "vHover", "vInterCell", "vInterPt", "vAskCell", "vAskPt", "vGrow", "vShrink", "vClear"], "", true)}
            <a class="view" href="#view">RenderView1</a>
            ${["splitH", "splitV", "maximize", "close"].map(n => html`<button class="framed" aria-label=${n}>${icon(n)}</button>`)}
          </div>
          <section class="render" id="view">
            <div class="plot">
              <flow-field></flow-field>
              <svg class="triad" width="36" height="36" viewBox="0 0 36 36" font-family="Noto Sans" font-size="8" fill="#111">
                <path d="M6.500 28V10" stroke="#efe98a"/><path d="M4 11l2.500-5 2.500 5z" fill="#d8cf3e"/>
                <path d="M6 29.500h20" stroke="#dd6a62"/><path d="M25 27l5 2.500-5 2.500z" fill="#c3291f"/>
                <circle cx="6.500" cy="29.500" r="2.200" fill="#1f6a1c"/>
                <text x="7" y="10">Y</text><text x="8" y="30">Z</text><text x="27" y="30">X</text>
              </svg>
            </div>
            <div class="legend">
              <div class="scale">
                <div>U X</div>
                <div class="labels">${["0.0e+00", "0.1", "0.2", "0.3", "0.4", "0.5", "0.6", "0.7", "8.0e-01"].map(t => html`<span class="mark">${t}</span>`)}</div>
                <div class="ramp"></div>
              </div>
            </div>
          </section>
        </main>
      </div>`;
  }

  dockTitle(name: string) {
    return html`<h2 class="title"><span class="name">${name}</span>
      <button aria-label="Float">${icon("float")}</button><button aria-label="Close">${icon("close")}</button></h2>`;
  }

  form() {
    const checks = (list: [string, boolean][]) => list.map(([l, on]) => html`<check-row label=${l} ?on=${on}></check-row>`);
    return html`
      <div class="area">
        <div class="form">
          <div class="row acts">
            <button class="framed head"><span class="dash"></span><span class="cut">Properties (cylindr</span></button>
            ${["copy", "paste", "refresh"].map(n => html`<button class="framed sq" aria-label=${n}>${icon(n)}</button>`)}
            <button class="framed part" aria-label="Save defaults">${icon("disk")}</button>
          </div>
          <div class="row file">
            <label for="file">File Name</label>
            <input class="text" id="file" value="Re1/cylindre_Re1.OpenFOAM">
            <button class="framed part" aria-label="Browse">.</button>
          </div>
          <div class="row"><button class="framed refresh">Refresh Times</button></div>
          ${checks([["Cache Mesh", true], ["Use VTK Polyhedron", false], ["Skip Zero Time", false], ["Interpolate Volume Fields", true], ["Extrapolate Patches", false], ["Show Patch Names", false]])}
          <h3>Selection</h3>
          ${checks([["Include Sets", false], ["Include Zones", true], ["Groups Only", false]])}
        </div>
        <div class="vs">
          <div class="thumb"><svg class="arrow" width="5" height="4"><path d="M0 3l2.500-3L5 3z" fill="#444"/></svg></div>
          <svg class="arrow down" width="5" height="4"><path d="M0 0h5L2.500 3z" fill="#444"/></svg>
        </div>
        <div class="hs">
          <svg class="arrow" width="4" height="5"><path d="M3 0v5L0 2.500z" fill="#444"/></svg>
          <div class="thumb"></div>
          <svg class="arrow" width="4" height="5"><path d="M0 0v5l3-2.500z" fill="#444"/></svg>
        </div>
      </div>`;
  }

  firstUpdated() {
    const file = this.renderRoot.querySelector<HTMLInputElement>("#file")!;
    file.scrollLeft = file.scrollWidth;
  }
}
